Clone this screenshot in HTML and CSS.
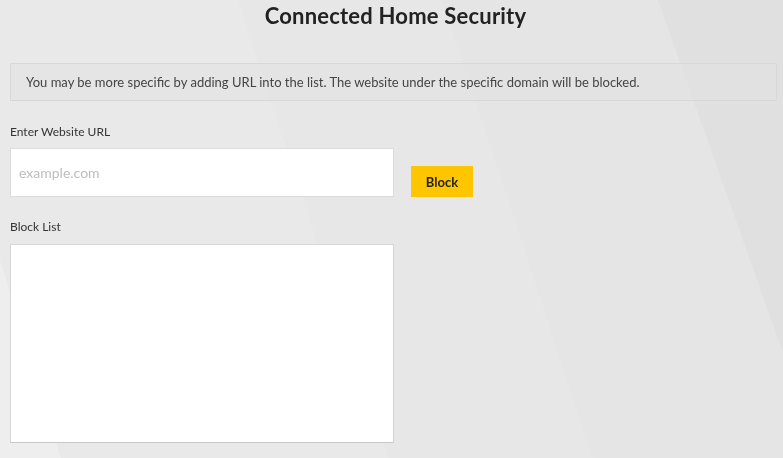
FILE: index.html
```html
<!DOCTYPE html>
<html lang="en">
<head>
<meta charset="utf-8">
<title>Connected Home Security</title>
<link rel="stylesheet" href="styles.css">
</head>
<body>
<div class="backdrop" aria-hidden="true">
  <svg viewBox="0 0 783 458" width="783" height="458" preserveAspectRatio="none">
    <rect x="0" y="0" width="783" height="458" fill="#e9e9e9"/>
    <polygon points="0,260 61,458 0,458" fill="#eeeeee"/>
    <polygon points="238,0 783,0 783,458 388,458" fill="#e7e7e7"/>
    <polygon points="442,0 783,0 783,458 593,458" fill="#e5e5e5"/>
    <polygon points="658,0 783,0 783,353" fill="#e0e0e0"/>
  </svg>
</div>
<main class="page">
  <h1 class="title">Connected Home Security</h1>
  <div class="info">You may be more specific by adding URL into the list. The website under the specific domain will be blocked.</div>
  <label class="label label-url" for="url">Enter Website URL</label>
  <div class="url-row">
    <input class="url-input" id="url" type="text" placeholder="example.com">
    <button class="btn-block" type="button">Block</button>
  </div>
  <label class="label label-list" for="list">Block List</label>
  <textarea class="block-list" id="list"></textarea>
</main>
</body>
</html>
```
FILE: styles.css
```css
html, body {
  margin: 0;
  padding: 0;
  height: 100%;
  overflow: hidden;
}
body {
  font-family: "Lato", "Open Sans", sans-serif;
  color: #333;
  background: #e9e9e9;
}
.backdrop {
  position: fixed;
  inset: 0;
  z-index: -1;
}
.backdrop svg {
  display: block;
  width: 100%;
  height: 100%;
}
.page {
  padding: 2px 6px 0 10px;
  display: flex;
  flex-direction: column;
  align-items: flex-start;
}
.title {
  align-self: stretch;
  margin: 0;
  font-size: 22px;
  line-height: 28px;
  font-weight: 700;
  letter-spacing: 0.2px;
  color: #222;
  text-align: center;
  padding-left: 4px;
}
.info {
  align-self: stretch;
  margin-top: 33px;
  height: 36px;
  box-sizing: content-box;
  border: 1px solid #d8d8d8;
  background: rgba(225, 225, 225, 0.55);
  font-size: 13px;
  line-height: 36px;
  color: #444;
  padding-left: 15px;
}
.label {
  font-size: 12px;
  line-height: 18px;
  color: #333;
}
.label-url {
  margin-top: 22px;
}
.url-row {
  margin-top: 7px;
  display: flex;
  align-items: flex-end;
  gap: 17px;
}
.url-input {
  width: 384px;
  height: 49px;
  box-sizing: border-box;
  border: 1px solid #dcdcdc;
  background: #fff;
  padding: 0 8px;
  font-family: inherit;
  font-size: 14px;
  color: #333;
  outline: none;
  margin: 0;
}
.url-input::placeholder {
  color: #bdbdbd;
}
.btn-block {
  width: 62px;
  height: 31px;
  border: none;
  background: #ffc600;
  font-family: inherit;
  font-weight: 700;
  font-size: 13px;
  color: #222;
  padding: 0;
  margin: 0;
}
.label-list {
  margin-top: 21px;
}
.block-list {
  margin-top: 8px;
  width: 384px;
  height: 199px;
  box-sizing: border-box;
  border: 1px solid #d6d6d6;
  border-bottom-color: #c8c8c8;
  background: #fff;
  resize: none;
  outline: none;
  padding: 4px;
}
```
